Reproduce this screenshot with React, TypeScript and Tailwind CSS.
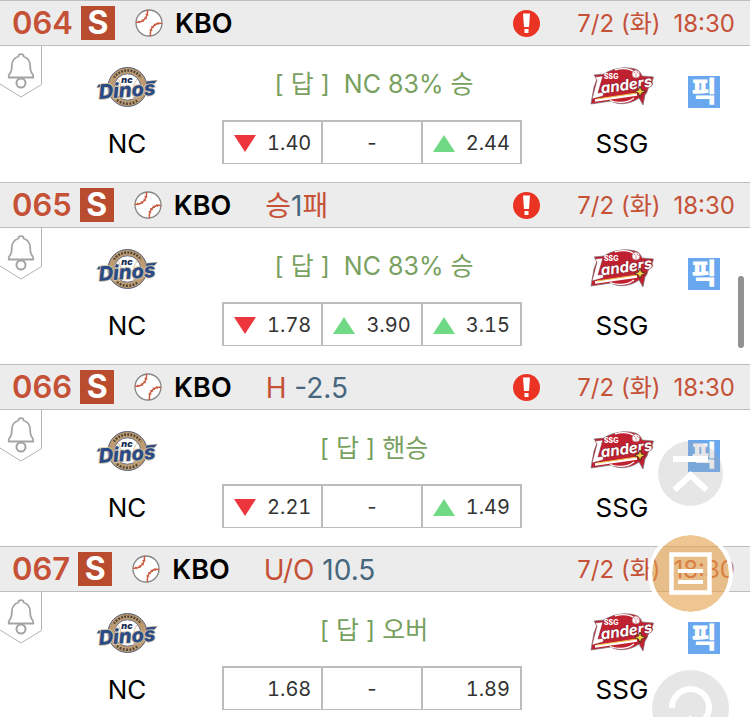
import { clsx } from 'clsx';

type Trend = 'up' | 'down';

interface Odd {
    value: string;
    trend?: Trend;
}

interface Game {
    no: string;
    market: { text: string; accent?: boolean }[];
    alert: boolean;
    answer: string;
    odds: Odd[];
}

const games: Game[] = [
    {
        no: '064',
        market: [],
        alert: true,
        answer: '[ 답 ]\u00a0 NC 83% 승',
        odds: [{ value: '1.40', trend: 'down' }, { value: '-' }, { value: '2.44', trend: 'up' }],
    },
    {
        no: '065',
        market: [{ text: '승' }, { text: '1', accent: true }, { text: '패' }],
        alert: true,
        answer: '[ 답 ]\u00a0 NC 83% 승',
        odds: [
            { value: '1.78', trend: 'down' },
            { value: '3.90', trend: 'up' },
            { value: '3.15', trend: 'up' },
        ],
    },
    {
        no: '066',
        market: [{ text: 'H ' }, { text: '-2.5', accent: true }],
        alert: true,
        answer: '[ 답 ] 핸승',
        odds: [{ value: '2.21', trend: 'down' }, { value: '-' }, { value: '1.49', trend: 'up' }],
    },
    {
        no: '067',
        market: [{ text: 'U/O ' }, { text: '10.5', accent: true }],
        alert: false,
        answer: '[ 답 ] 오버',
        odds: [{ value: '1.68' }, { value: '-' }, { value: '1.89' }],
    },
];

const Baseball = () => (
    <svg viewBox="0 0 28 28" className="w-7 h-7 shrink-0" aria-hidden="true">
        <circle cx="14" cy="14" r="13" fill="#fff" stroke="#858585" strokeWidth="1.3" />
        <g fill="none" stroke="#c9573c" strokeLinecap="round">
            <path d="M12.5 1.5C13 8 8.5 13.5 1.5 13.2" strokeWidth="1.5" />
            <path d="M26.5 14.5C20 13.5 14.5 19 15.5 26.5" strokeWidth="1.5" />
            <path d="M10.8 5.5l2.200 .5M9.800 8.400l1.800 1.400M7.200 10.600l1 2M3.800 12l.3 1.800M22.800 13.500l.5 1.800M19.200 15l1.400 1.700M16.500 17.600l2 1M14.800 20.900l2.200.3" strokeWidth="1" />
        </g>
    </svg>
);

const AlertMark = () => (
    <svg viewBox="0 0 27 27" className="w-[27px] h-[27px] shrink-0" role="img" aria-label="alert">
        <circle cx="13.5" cy="13.5" r="13.5" fill="#ea3323" />
        <path d="M10 3.5h7l-1 13.5h-5z" fill="#fff" />
        <rect x="11.5" y="19" width="4" height="4" fill="#fff" />
    </svg>
);

const BellTab = () => (
    <svg viewBox="0 0 42 52" className="w-[42px] h-[52px]" fill="none" aria-hidden="true">
        <path d="M41.5 0v38.5L21 51 0 38" stroke="#b3b3b3" />
        <path
            d="M21 8.2c-1.7 0-2.6 1-2.6 2.3-4.4 1.3-6.6 5-6.6 9.5 0 4.3-.4 6.3-2.5 8.3-.6.6-.6 1.2-.6 3.2h24.6c0-2 0-2.6-.6-3.2-2.1-2-2.5-4-2.5-8.3 0-4.5-2.2-8.2-6.6-9.5 0-1.3-.9-2.3-2.6-2.3z"
            stroke="#a3a3a3"
            strokeWidth="1.8"
            strokeLinejoin="round"
        />
        <circle cx="21" cy="37" r="4.5" stroke="#a3a3a3" strokeWidth="2" />
    </svg>
);

const DinosLogo = () => (
    <svg viewBox="0 0 60 40" className="w-[60px] h-10 overflow-visible" role="img" aria-label="NC Dinos">
        <circle cx="30.5" cy="20" r="19.5" fill="#bd9c72" stroke="#33436b" strokeWidth=".8" />
        <circle cx="30.5" cy="20" r="13.2" fill="#fff" stroke="#4b5674" strokeWidth=".8" />
        {/* lettering band around the badge */}
        <path d="M17 10.5a16.5 16.5 0 0 1 27 0" fill="none" stroke="#4a4238" strokeWidth="2.4" strokeDasharray="1.8 1.3" />
        <path d="M20 33a16.5 16.5 0 0 0 21 0" fill="none" stroke="#4a4238" strokeWidth="2.4" strokeDasharray="1.8 1.5" />
        <path d="M21 12c4 5 4 14 1 20M40 12c-4 6-5 13-3 20" fill="none" stroke="#dcc6a8" strokeWidth="1" />
        <text x="30" y="15.5" textAnchor="middle" fontFamily="Inter, sans-serif" fontWeight="900" fontStyle="italic" fontSize="9" fill="#172c55">nc</text>
        <g transform="rotate(-4 30 24)">
            <path d="M0 18.5l2-3h10l-2 3zM50 15.500h11l-3 3h-9z" fill="#2b4b86" stroke="#c9b08c" strokeWidth=".5" />
            <text x="30" y="30" textAnchor="middle" fontFamily="Inter, sans-serif" fontWeight="800" fontStyle="italic" fontSize="20" fill="#2b4b86" stroke="#d8c6a8" strokeWidth="1.6" paintOrder="stroke">Dinos</text>
        </g>
    </svg>
);

const LandersLogo = () => (
    <svg viewBox="0 0 64 40" className="w-16 h-10 overflow-visible" role="img" aria-label="SSG Landers">
        <path d="M4 8l10-1C21 2 34-1 45 2c4 1 6 4 7 7l11.500 1-1.500 5 1 2-4 2-2 6-2 3-2 10-4-7c-9 7-22 7-28 3L1 37l3-17 3-8z" fill="#bf2130" stroke="#77737a" strokeWidth=".7" />
        <path d="M25 2.800c8-2 15-1 19 2M20 33.500c10 3.500 18 2 24-2.500" fill="none" stroke="#fff" strokeWidth="1.200" />
        <circle cx="46" cy="7" r="4" fill="#fff" stroke="#ad6066" strokeWidth=".7" />
        <path d="M43.500 5c2 0 3 2 2.500 5M47 3.700c0 2 1 3 3 3" fill="none" stroke="#bf2130" strokeWidth=".5" />
        <path d="M5 33.500l42-6" stroke="#fff" strokeWidth="2.600" />
        <path d="M7 32l40-6" stroke="#efbd4a" strokeWidth="1.200" />
        <text x="14" y="12" fontFamily="Inter, sans-serif" fontWeight="800" fontSize="7" fill="#fff">SSG</text>
        <path d="M5 10l8-1-1 3-4 14 6-1-1 4-11 3 5-19z" fill="#fff" stroke="#84202c" strokeWidth=".5" />
        <text transform="rotate(-8 37 22)" x="37" y="23" textAnchor="middle" fontFamily="Inter, sans-serif" fontWeight="700" fontStyle="italic" fontSize="15" fill="#fff" stroke="#84202c" strokeWidth="1" paintOrder="stroke">anders</text>
        <path d="M50 19l1.500 4 4 1.500-4 1.500-1.500 4-1.500-4-4-1.500 4-1.500z" fill="#f5d547" stroke="#4b2c23" strokeWidth=".9" />
    </svg>
);

const TrendMark = ({ trend }: { trend?: Trend }) => {
    if (!trend) return <span />;
    return (
        <svg viewBox="0 0 22 17" className="w-[22px] h-[17px]" role="img" aria-label={trend}>
            {trend === 'up' ? (
                <path d="M11 0l11 17H0z" fill="#6fd985" />
            ) : (
                <path d="M0 0h22L11 17z" fill="#ec353c" />
            )}
        </svg>
    );
};

const OddsTable = ({ odds }: { odds: Odd[] }) => (
    <table className="w-[300px] h-11 table-fixed border-separate border-spacing-0 border-l-2 border-t-2 border-b border-[#bcbcbc] text-xl leading-6 text-[#333] tabular-nums">
        <tbody>
            <tr>
                {odds.map((odd, i) => (
                    <td key={i} className="p-0 pt-px border-r-2 border-[#bcbcbc]">
                        {odd.value === '-' ? (
                            <div className="text-center">-</div>
                        ) : (
                            <div className="flex items-center justify-between px-[10px]">
                                <TrendMark trend={odd.trend} />
                                <span>{odd.value}</span>
                            </div>
                        )}
                    </td>
                ))}
            </tr>
        </tbody>
    </table>
);

const GameHeader = ({ game }: { game: Game }) => (
    <header className="flex items-center h-[46px] pl-3 pr-[15px] bg-[#ececec] border-y border-[#bebebe] whitespace-nowrap">
        <span className="text-[31px] leading-9 font-semibold text-[#c55137]">{game.no}</span>
        <span className="ml-2 flex items-center justify-center w-[34px] h-[34px] bg-[#b94b2e] text-[32px] font-bold text-white">S</span>
        <span className="ml-5 flex"><Baseball /></span>
        <h2 className="ml-3 pt-px text-[27px] leading-9 font-semibold text-black">KBO</h2>
        <span className="ml-[34px] pt-px text-[28px] leading-9 text-[#c55137] whitespace-pre">
            {game.market.map((part) => (
                <span key={part.text} className={clsx(part.accent && 'text-[#46677d]')}>{part.text}</span>
            ))}
        </span>
        <span className="ml-auto flex items-center">
            {game.alert && <AlertMark />}
            <time className="ml-[37px] pt-px flex gap-[13px] text-2xl leading-9 text-[#c55137]">
                <span>7/2 (화)</span>
                <span>18:30</span>
            </time>
        </span>
    </header>
);

const GameCard = ({ game }: { game: Game }) => (
    <article>
        <GameHeader game={game} />
        <div className="grid grid-cols-[42px_170fr_320fr_156fr_62px] grid-rows-[74px_44px] pb-[18px]">
            <button type="button" aria-label={`${game.no} 알림`} className="self-start">
                <BellTab />
            </button>
            <div className="flex items-center justify-center pt-2"><DinosLogo /></div>
            <p className="flex items-center justify-center pl-1 pt-1 text-[25px] text-[#78a05e] whitespace-pre">{game.answer}</p>
            <div className="flex items-center justify-center pl-6 pt-2"><LandersLogo /></div>
            <div className="flex items-center pt-[18px]">
                <button type="button" className="w-8 h-8 bg-[#69a8ee] text-[28px] leading-8 font-black text-white">픽</button>
            </div>
            <div className="col-start-2 flex items-center justify-center pt-[3px] text-[26px] text-black">NC</div>
            <div className="flex justify-center"><OddsTable odds={game.odds} /></div>
            <div className="flex items-center justify-center pl-6 pt-[3px] text-[26px] text-black">SSG</div>
        </div>
    </article>
);

const FloatingActions = () => (
    <nav className="fixed right-[17px] -bottom-[30px] flex flex-col items-center" aria-label="바로가기">
        <button type="button" aria-label="맨 위로" className="w-[65px] h-[65px] rounded-full bg-[#a6a6a6]/28">
            <svg viewBox="0 0 65 65" fill="none" stroke="#fff" aria-hidden="true">
                <path d="M15 18h35" strokeWidth="6" />
                <path d="M16.5 49l16-15 16 15" strokeWidth="6" />
            </svg>
        </button>
        <button type="button" aria-label="목록" className="mt-[25px] w-[85px] h-[85px] rounded-full border-4 border-white bg-[#e59e47]/60 bg-clip-padding">
            <svg viewBox="0 0 77 77" fill="none" stroke="#fff" aria-hidden="true">
                <path d="M19.5 19.5h38v38h-38z" strokeWidth="4.5" />
                <path d="M26 36h25M26 47h25" strokeWidth="4" />
            </svg>
        </button>
        <button type="button" aria-label="도움말" className="mt-[54px] w-[77px] h-[77px] rounded-full bg-[#a6a6a6]/28">
            <svg viewBox="0 0 77 77" fill="none" stroke="#fff" aria-hidden="true">
                <path d="M20 38a18.500 18.500 0 1 1 27 16c-6 3-8 5-8 10" strokeWidth="6" />
                <path d="M36 47l3-2v6z" fill="#fff" stroke="none" />
            </svg>
        </button>
    </nav>
);

export default function App() {
    return (
        <div className="h-screen overflow-hidden bg-white font-['Inter','Noto_Sans_CJK_KR',sans-serif]">
            <main>
                {games.map((game) => (
                    <GameCard key={game.no} game={game} />
                ))}
            </main>
            <div className="fixed right-[6px] top-[276px] w-[6px] h-[72px] rounded-full bg-[#929292]" />
            <FloatingActions />
        </div>
    );
}
